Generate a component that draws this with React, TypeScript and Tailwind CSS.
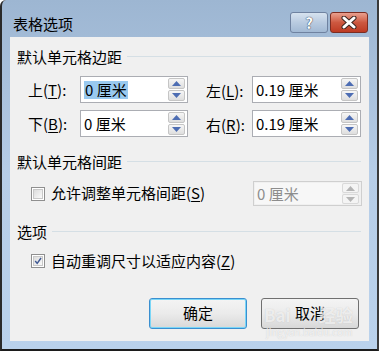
import React from 'react';

const font = { fontFamily: '"Noto Sans CJK SC", "Liberation Sans", sans-serif' };

function Spinner({ disabled = false }: { disabled?: boolean }) {
  const arrow = disabled ? '#b4b4b4' : '#4d6db3';
  return (
    <div className="flex flex-col h-full w-[17px] py-[1px] gap-[1px]">
      {[0, 1].map(i => (
        <div
          key={i}
          className={`flex-1 flex items-center justify-center border ${disabled ? 'border-[#d9d9d9] bg-[#f4f4f4]' : 'border-[#c5c5c5] bg-gradient-to-b from-[#f6f6f6] to-[#dedede]'} rounded-[2px]`}
        >
          <svg width="9" height="5" viewBox="0 0 9 5">
            {i === 0 ? <path d="M0 5 L4.5 0 L9 5 Z" fill={arrow} /> : <path d="M0 0 L4.5 5 L9 0 Z" fill={arrow} />}
          </svg>
        </div>
      ))}
    </div>
  );
}

function SpinInput({ value, selected = false, disabled = false, h = 27 }: { value: string; selected?: boolean; disabled?: boolean; h?: number }) {
  return (
    <div
      className={`flex items-stretch border ${disabled ? 'border-[#cfcfcf] bg-[#f0f0f0]' : 'border-[#abadb3] bg-white'} pl-[3px] pr-[2px]`}
      style={{ height: h }}
    >
      <div className={`flex-1 flex items-center text-[15px] ${disabled ? 'text-[#8d8d8d] bg-[#f7f7f7] -ml-[2px] pl-[2px] my-[1px]' : 'text-black'}`}>
        <span className={selected ? 'bg-[#99c9ef] px-[1px] leading-[18px]' : 'leading-[18px]'}>{value}</span>
      </div>
      <Spinner disabled={disabled} />
    </div>
  );
}

function SectionHeader({ title }: { title: string }) {
  return (
    <div className="flex items-center h-[20px]">
      <span className="text-[15px] text-black leading-none">{title}</span>
      <div className="flex-1 h-px bg-[#d5dfe5] ml-[5px] mr-[1px]" />
    </div>
  );
}

function Label({ text, hot }: { text: string; hot: string }) {
  return (
    <span className="text-[15px] text-black leading-none">
      {text}(<span className="underline underline-offset-2">{hot}</span>):
    </span>
  );
}

function Checkbox({ checked }: { checked: boolean }) {
  return (
    <div className="w-[14px] h-[14px] border border-[#8f8f8f] bg-white p-[1px]">
      <div className="w-full h-full bg-gradient-to-br from-[#dcdcdc] to-[#fafafa] border border-[#c8c8c8] flex items-center justify-center">
        {checked && (
          <svg width="10" height="10" viewBox="0 0 10 10">
            <path d="M1.5 5 L4 8 L8.8 1.2" stroke="#3f5893" strokeWidth="1.8" fill="none" />
          </svg>
        )}
      </div>
    </div>
  );
}

function TitleButton({ kind }: { kind: 'help' | 'close' }) {
  const cls =
    kind === 'help'
      ? 'border-[#6f82a0] bg-gradient-to-b from-[#d6e2ef] via-[#b9cbe0] to-[#a2b9d4]'
      : 'border-[#7b2d22] bg-gradient-to-b from-[#e9a08f] via-[#cd5840] to-[#bd3a22]';
  return (
    <div className={`w-[38px] h-[21px] rounded-[3px] border flex items-center justify-center ${cls}`}>
      {kind === 'help' ? (
        <span className="text-[15px] font-bold text-white leading-none" style={{ ...font, textShadow: '0 0 1px #2c3a52, 0 0 1px #2c3a52' }}>?</span>
      ) : (
        <svg width="16" height="13" viewBox="0 0 16 13">
          <path d="M3 2 L13 11 M13 2 L3 11" stroke="#3b2520" strokeWidth="5" strokeLinecap="round" />
          <path d="M3 2 L13 11 M13 2 L3 11" stroke="#ffffff" strokeWidth="3" strokeLinecap="round" />
        </svg>
      )}
    </div>
  );
}

function Button({ text, focused = false }: { text: string; focused?: boolean }) {
  return (
    <div
      className={`w-[98px] h-[31px] rounded-[3px] border flex items-center justify-center text-[15px] text-black bg-gradient-to-b from-[#f4f4f4] via-[#ebebeb] to-[#d8d8d8] ${
        focused ? 'border-[#3a8fd0] shadow-[inset_0_0_0_1px_#7ad6f7]' : 'border-[#707070]'
      }`}
    >
      {text}
    </div>
  );
}

export default function App() {
  return (
    <div className="relative w-[379px] h-[351px] overflow-hidden" style={font}>
      <div className="flex flex-col h-full border-l-2 border-r-2 border-b-2 border-l-[#2a2a2a] border-r-[#3a3a3a] border-b-[#1c1c1c] rounded-tl-[6px] bg-gradient-to-b from-[#9db6d2] via-[#b6cde7] to-[#bad2ec]">
        {/* Title bar */}
        <div className="h-[37px] flex items-start pl-[11px] pr-[9px]">
          <span className="text-[15px] text-black flex-1 leading-none mt-[16px]">表格选项</span>
          <div className="flex gap-[2px] mt-[12px]">
            <TitleButton kind="help" />
            <TitleButton kind="close" />
          </div>
        </div>

        {/* Content */}
        <div className="mx-[8px] h-[304px] bg-[#f0f0f0] px-[7px] pt-[9px]">
          <SectionHeader title="默认单元格边距" />

          <div className="mt-[10px] grid grid-cols-[52px_108px_64px_109px] gap-y-[7px] pl-[11px] items-center">
            <Label text="上" hot="T" />
            <SpinInput value="0 厘米" selected />
            <div className="pl-[18px]"><Label text="左" hot="L" /></div>
            <SpinInput value="0.19 厘米" />
            <Label text="下" hot="B" />
            <SpinInput value="0 厘米" />
            <div className="pl-[18px]"><Label text="右" hot="R" /></div>
            <SpinInput value="0.19 厘米" />
          </div>

          <div className="mt-[14px]">
            <SectionHeader title="默认单元格间距" />
          </div>

          <div className="mt-[10px] flex items-center pl-[14px]">
            <Checkbox checked={false} />
            <span className="ml-[6px] text-[15px] text-black flex-1">
              允许调整单元格间距(<span className="underline underline-offset-2">S</span>)
            </span>
            <div className="w-[109px]">
              <SpinInput value="0 厘米" disabled h={25} />
            </div>
          </div>

          <div className="mt-[15px]">
            <SectionHeader title="选项" />
          </div>

          <div className="mt-[10px] flex items-center h-[20px] pl-[14px]">
            <Checkbox checked />
            <span className="ml-[6px] text-[15px] text-black">
              自动重调尺寸以适应内容(<span className="underline underline-offset-2">Z</span>)
            </span>
          </div>

          <div className="mt-[27px] flex justify-end gap-[14px] pr-[3px]">
            <Button text="确定" focused />
            <Button text="取消" />
          </div>
        </div>
      </div>

      {/* watermark */}
      <div className="absolute left-[264px] top-[306px] pointer-events-none text-white/70 leading-none" style={{ textShadow: '0 0 1px rgba(120,120,120,0.35)' }}>
        <div className="text-[17px] font-bold">Bai<span className="ml-[28px]">经验</span></div>
        <div className="text-[10px] mt-[4px] ml-[2px]">jingyan.baidu.com</div>
      </div>
    </div>
  );
}
